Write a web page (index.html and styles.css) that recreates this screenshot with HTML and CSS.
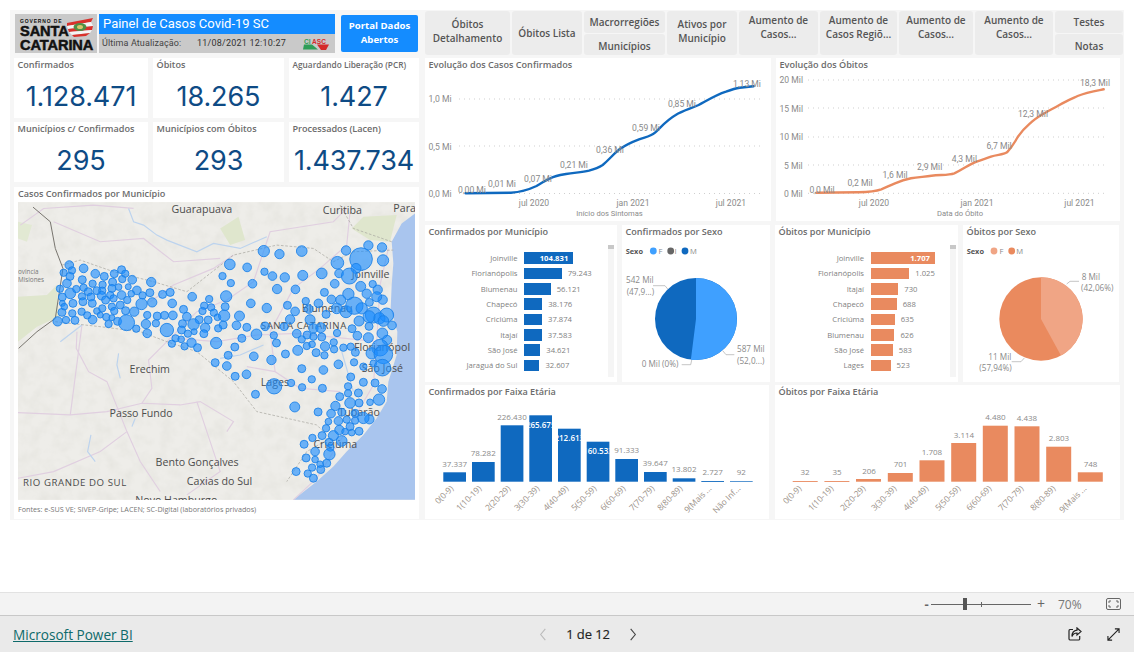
FILE: index.html
```html
<!DOCTYPE html>
<html lang="pt-BR">
<head>
<meta charset="utf-8">
<title>Painel de Casos Covid-19 SC</title>
<link rel="stylesheet" href="styles.css">
</head>
<body>
<main class="canvas">
  <section class="left">
    <header class="head">
      <div class="logo">
        <span class="logo-gov">GOVERNO DE</span>
        <span class="logo-sc">SANTA</span>
        <span class="logo-sc">CATARINA</span>
        <svg class="logo-flag" viewBox="0 0 28 19">
          <path d="M1 5 L27 0 L25 4 L1 8Z" fill="#d9312b"/>
          <path d="M1 8 L25 4 L27 8 L2 11Z" fill="#f5f5f5"/>
          <path d="M2 11 L27 8 L26 12 L3 14Z" fill="#d9312b"/>
          <path d="M3 14 L26 12 L24 15 L6 17Z" fill="#f5f5f5"/>
          <path d="M6 17 L24 15 L20 18 L8 19Z" fill="#d9312b"/>
          <ellipse cx="14" cy="9" rx="6.5" ry="4" fill="#4f8f45"/>
          <ellipse cx="14" cy="9" rx="3" ry="2" fill="#d8c66a"/>
        </svg>
      </div>
      <div class="banner">
        <h1 class="banner-title">Painel de Casos Covid-19 SC</h1>
        <div class="banner-sub">
          <span class="upd">Última Atualização:</span>
          <span class="stamp">11/08/2021 12:10:27</span>
          <svg class="ciasc" viewBox="0 0 28 13">
            <text x="2" y="6.5" class="ciasc-g">CI</text>
            <text x="10" y="6.5" class="ciasc-r">ASC</text>
            <path d="M1 12.5 L2 7.5 L10 7.5 L16 12.5Z" fill="#2f9e57"/>
            <path d="M15 7.5 L27 7.5 L24 13 L19 13Z" fill="#d52a2a"/>
          </svg>
        </div>
      </div>
      <a class="portal">Portal Dados<br>Abertos</a>
    </header>

    <div class="kpis">
      <div class="card kpi"><div class="title">Confirmados</div><div class="num">1.128.471</div></div>
      <div class="card kpi"><div class="title">Óbitos</div><div class="num">18.265</div></div>
      <div class="card kpi"><div class="title small">Aguardando Liberação (PCR)</div><div class="num">1.427</div></div>
      <div class="card kpi"><div class="title">Municípios c/ Confirmados</div><div class="num">295</div></div>
      <div class="card kpi"><div class="title">Municípios com Óbitos</div><div class="num">293</div></div>
      <div class="card kpi"><div class="title">Processados (Lacen)</div><div class="num">1.437.734</div></div>
    </div>

    <div class="card mapcard">
      <div class="title">Casos Confirmados por Município</div>
      <svg class="map" viewBox="53 51 1192 894">
        <defs>
          <filter id="terrain" x="0" y="0" width="100%" height="100%">
            <feTurbulence type="fractalNoise" baseFrequency=".025" numOctaves="4" seed="7"/>
            <feColorMatrix values="0 0 0 0 .62  0 0 0 0 .62  0 0 0 0 .56  0 0 0 .45 -.17"/>
          </filter>
        </defs>
        <rect x="53" y="51" width="1192" height="894" fill="#eeede9"/>
        <rect x="53" y="51" width="1192" height="894" filter="url(#terrain)"/>
        <path class="green" d="M53 335 L140 330 L170 300 L175 395 L110 425 L53 470Z"/>
        <path class="green" d="M1055 130 L1090 95 L1190 90 L1170 170 L1110 165Z"/>
        <path class="green" d="M660 130 L715 95 L735 165 L690 180Z"/>
        <path class="green light" d="M53 110 L95 120 L80 170 L53 160Z"/>
        <path class="sea" d="M1245 85 L1205 115 L1175 170 L1180 235 L1175 300 L1172 370 L1192 440 L1190 510 L1165 590 L1160 650 L1130 700 L1090 750 L1040 800 L1000 845 L950 890 L880 945 L1245 945Z"/>
        <g class="roads">
          <path d="M230 440 L228 490 L265 560 L320 590 L380 740 L420 830 L480 920"/>
          <path d="M53 683 L210 690 L320 680 L425 655 L540 660 L600 650 L700 710 L680 740"/>
          <path d="M210 690 L245 420"/>
          <path d="M425 655 L455 610 L445 525 L500 470 L590 380 L680 345 L760 290 L810 140 L1000 110 L1040 70"/>
          <path d="M530 460 L650 470 L770 450 L890 445 L1130 470"/>
          <path d="M740 545 L825 560 L900 610 L1020 620"/>
          <path d="M825 560 L810 440 L880 310 L960 250 L1040 180 L1050 80"/>
          <path d="M1165 190 L1140 300 L1130 470 L1120 600 L1050 720 L950 880 L880 945"/>
          <path d="M60 120 L130 70 L280 60 L400 70"/>
          <path d="M380 740 L300 800 L160 860 L53 880"/>
          <path d="M590 650 L640 800 L660 860 L560 930"/>
          <path d="M160 110 L300 170 L430 160 L520 230 L660 220"/>
          <path d="M450 350 L520 300 L640 250 L700 210"/>
        </g>
        <g class="rivers">
          <path d="M385 70 L400 110 L430 120 L470 150 L500 165 L590 200 L640 175 L720 190 L800 155"/>
          <path d="M355 505 L350 540 L360 580"/>
          <path d="M272 750 L262 800 L285 830"/>
          <path d="M245 420 L180 470"/>
          <path d="M660 520 L720 510 L790 480"/>
          <path d="M1025 500 L1060 620"/>
          <path d="M405 700 L395 725"/>
        </g>
        <g class="border">
          <path d="M185 240 L240 225 L340 260 L460 290 L560 320 L700 210 L830 180 L940 190 L1000 230 L1060 200 L1180 195"/>
          <path d="M165 410 L300 425 L420 440 L500 470 L590 500 L700 590 L770 680 L860 700 L950 720 L990 760 L920 800 L860 890"/>
          <path d="M1020 60 L1060 130 L1175 170"/>
        </g>
        <path class="state" d="M98 66 L150 110 L165 190 L188 250 L165 400 L110 440 L55 490"/>
        <g class="places">
          <text x="514" y="83">Guarapuava</text>
          <text x="968" y="88">Curitiba</text>
          <text x="1180" y="81">Para</text>
          <text x="388" y="565">Erechim</text>
          <text x="328" y="695">Passo Fundo</text>
          <text x="466" y="844">Bento Gonçalves</text>
          <text x="560" y="899">Caxias do Sul</text>
          <text x="405" y="958">Novo Hamburgo</text>
          <text x="68" y="903" class="state-name">RIO GRANDE DO SUL</text>
          <text x="53" y="268" class="mini">ovincia</text>
          <text x="53" y="292" class="mini">Misiones</text>
          <text x="1055" y="278">Joinville</text>
          <text x="905" y="380">Blumenau</text>
          <text x="782" y="431" class="state-name">SANTA CATARINA</text>
          <text x="1062" y="498">Florianópol</text>
          <text x="1085" y="560">São José</text>
          <text x="782" y="602">Lages</text>
          <text x="1015" y="692">Tubarão</text>
          <text x="940" y="788">Criciúma</text>
        </g>
        <g class="bubbles">
          <circle cx="207" cy="240" r="13"/><circle cx="190" cy="263" r="11"/><circle cx="215" cy="256" r="11"/><circle cx="250" cy="250" r="13"/><circle cx="209" cy="274" r="12"/><circle cx="285" cy="266" r="13"/><circle cx="312" cy="274" r="12"/><circle cx="342" cy="266" r="12"/><circle cx="364" cy="254" r="12"/><circle cx="375" cy="266" r="11"/><circle cx="246" cy="284" r="12"/><circle cx="200" cy="295" r="13"/><circle cx="277" cy="296" r="11"/><circle cx="307" cy="299" r="11"/><circle cx="337" cy="291" r="12"/><circle cx="366" cy="282" r="11"/><circle cx="396" cy="284" r="13"/><circle cx="453" cy="291" r="14"/><circle cx="179" cy="311" r="11"/><circle cx="210" cy="325" r="16"/><circle cx="228" cy="312" r="11"/><circle cx="250" cy="308" r="11"/><circle cx="264" cy="320" r="12"/><circle cx="290" cy="317" r="12"/><circle cx="306" cy="317" r="11"/><circle cx="335" cy="310" r="12"/><circle cx="355" cy="306" r="10"/><circle cx="384" cy="305" r="9"/><circle cx="410" cy="316" r="13"/><circle cx="427" cy="331" r="11"/><circle cx="449" cy="323" r="12"/><circle cx="487" cy="328" r="12"/><circle cx="510" cy="322" r="12"/><circle cx="186" cy="336" r="12"/><circle cx="245" cy="334" r="11"/><circle cx="272" cy="336" r="12"/><circle cx="304" cy="332" r="13"/><circle cx="330" cy="330" r="11"/><circle cx="364" cy="330" r="13"/><circle cx="393" cy="326" r="10"/><circle cx="186" cy="355" r="9"/><circle cx="218" cy="355" r="12"/><circle cx="248" cy="350" r="12"/><circle cx="276" cy="355" r="12"/><circle cx="316" cy="345" r="12"/><circle cx="340" cy="340" r="11"/><circle cx="381" cy="345" r="11"/><circle cx="424" cy="357" r="17"/><circle cx="456" cy="352" r="14"/><circle cx="516" cy="355" r="13"/><circle cx="185" cy="382" r="12"/><circle cx="216" cy="385" r="11"/><circle cx="244" cy="380" r="11"/><circle cx="192" cy="365" r="10"/><circle cx="261" cy="391" r="11"/><circle cx="290" cy="378" r="10"/><circle cx="306" cy="370" r="11"/><circle cx="335" cy="365" r="11"/><circle cx="360" cy="360" r="12"/><circle cx="342" cy="378" r="11"/><circle cx="376" cy="377" r="12"/><circle cx="402" cy="380" r="14"/><circle cx="441" cy="390" r="11"/><circle cx="471" cy="393" r="12"/><circle cx="493" cy="391" r="12"/><circle cx="518" cy="391" r="13"/><circle cx="172" cy="409" r="14"/><circle cx="197" cy="405" r="11"/><circle cx="224" cy="406" r="12"/><circle cx="277" cy="404" r="13"/><circle cx="318" cy="396" r="11"/><circle cx="300" cy="390" r="9"/><circle cx="335" cy="398" r="9"/><circle cx="325" cy="417" r="11"/><circle cx="352" cy="409" r="12"/><circle cx="379" cy="413" r="24"/><circle cx="408" cy="431" r="11"/><circle cx="437" cy="417" r="14"/><circle cx="467" cy="415" r="11"/><circle cx="441" cy="445" r="13"/><circle cx="500" cy="435" r="20"/>
          <circle cx="576" cy="335" r="13"/><circle cx="627" cy="342" r="11"/><circle cx="612" cy="362" r="11"/><circle cx="607" cy="378" r="11"/><circle cx="633" cy="367" r="11"/><circle cx="675" cy="365" r="12"/><circle cx="678" cy="334" r="17"/><circle cx="550" cy="373" r="12"/><circle cx="560" cy="395" r="13"/><circle cx="641" cy="383" r="11"/><circle cx="652" cy="397" r="10"/><circle cx="672" cy="392" r="17"/><circle cx="718" cy="393" r="15"/><circle cx="597" cy="404" r="12"/><circle cx="624" cy="405" r="12"/><circle cx="547" cy="416" r="12"/><circle cx="580" cy="418" r="17"/><circle cx="615" cy="428" r="14"/><circle cx="544" cy="435" r="12"/><circle cx="563" cy="446" r="11"/><circle cx="582" cy="440" r="9"/><circle cx="611" cy="446" r="12"/><circle cx="654" cy="430" r="11"/><circle cx="669" cy="420" r="12"/><circle cx="709" cy="421" r="13"/><circle cx="740" cy="427" r="12"/><circle cx="769" cy="448" r="16"/><circle cx="526" cy="460" r="11"/><circle cx="543" cy="463" r="10"/><circle cx="515" cy="476" r="11"/><circle cx="553" cy="484" r="11"/><circle cx="574" cy="473" r="14"/><circle cx="592" cy="488" r="12"/><circle cx="648" cy="474" r="17"/><circle cx="704" cy="486" r="12"/><circle cx="725" cy="460" r="12"/><circle cx="684" cy="511" r="12"/><circle cx="645" cy="533" r="12"/><circle cx="680" cy="543" r="13"/><circle cx="705" cy="574" r="12"/><circle cx="739" cy="568" r="13"/><circle cx="761" cy="514" r="13"/><circle cx="814" cy="525" r="14"/><circle cx="766" cy="628" r="12"/><circle cx="822" cy="604" r="23"/>
          <circle cx="791" cy="198" r="17"/><circle cx="838" cy="207" r="14"/><circle cx="905" cy="198" r="16"/><circle cx="689" cy="238" r="16"/><circle cx="741" cy="247" r="13"/><circle cx="667" cy="273" r="11"/><circle cx="692" cy="294" r="11"/><circle cx="757" cy="296" r="13"/><circle cx="793" cy="260" r="11"/><circle cx="817" cy="273" r="13"/><circle cx="854" cy="277" r="14"/><circle cx="908" cy="271" r="15"/><circle cx="965" cy="265" r="16"/><circle cx="1012" cy="233" r="19"/><circle cx="1038" cy="196" r="14"/><circle cx="1105" cy="181" r="14"/><circle cx="1146" cy="187" r="14"/><circle cx="1149" cy="226" r="17"/><circle cx="1083" cy="222" r="34"/><circle cx="1068" cy="250" r="15"/><circle cx="1017" cy="265" r="13"/><circle cx="1048" cy="273" r="24"/><circle cx="1004" cy="296" r="13"/><circle cx="1082" cy="304" r="15"/><circle cx="1118" cy="297" r="11"/><circle cx="1133" cy="314" r="14"/><circle cx="1148" cy="344" r="14"/><circle cx="831" cy="312" r="14"/><circle cx="886" cy="313" r="13"/><circle cx="973" cy="322" r="12"/><circle cx="1045" cy="327" r="17"/><circle cx="1100" cy="326" r="14"/><circle cx="1130" cy="335" r="15"/><circle cx="994" cy="343" r="13"/><circle cx="1022" cy="345" r="15"/><circle cx="917" cy="348" r="11"/><circle cx="955" cy="355" r="13"/><circle cx="752" cy="355" r="13"/><circle cx="800" cy="369" r="14"/><circle cx="862" cy="361" r="12"/><circle cx="885" cy="379" r="13"/><circle cx="926" cy="372" r="13"/><circle cx="978" cy="388" r="12"/><circle cx="1010" cy="370" r="16"/><circle cx="1038" cy="380" r="18"/><circle cx="1063" cy="362" r="26"/><circle cx="1085" cy="370" r="17"/><circle cx="1108" cy="352" r="12"/><circle cx="1120" cy="390" r="24"/><circle cx="1160" cy="390" r="21"/><circle cx="1138" cy="400" r="17"/><circle cx="870" cy="403" r="14"/><circle cx="930" cy="404" r="15"/><circle cx="1077" cy="408" r="15"/><circle cx="1107" cy="395" r="18"/><circle cx="1150" cy="408" r="16"/><circle cx="1176" cy="421" r="13"/><circle cx="795" cy="424" r="13"/><circle cx="852" cy="425" r="12"/><circle cx="890" cy="446" r="13"/><circle cx="940" cy="430" r="14"/><circle cx="962" cy="428" r="15"/><circle cx="1011" cy="444" r="11"/><circle cx="1056" cy="431" r="12"/><circle cx="1107" cy="424" r="12"/><circle cx="1147" cy="445" r="16"/><circle cx="1072" cy="452" r="13"/><circle cx="821" cy="451" r="11"/><circle cx="829" cy="474" r="12"/><circle cx="905" cy="463" r="11"/><circle cx="921" cy="450" r="12"/><circle cx="940" cy="455" r="11"/><circle cx="965" cy="456" r="12"/><circle cx="1001" cy="472" r="11"/><circle cx="1105" cy="458" r="15"/><circle cx="1161" cy="465" r="14"/><circle cx="893" cy="496" r="15"/><circle cx="920" cy="483" r="11"/><circle cx="936" cy="478" r="10"/><circle cx="975" cy="484" r="14"/><circle cx="948" cy="503" r="12"/><circle cx="973" cy="511" r="11"/><circle cx="1002" cy="493" r="11"/><circle cx="1030" cy="488" r="11"/><circle cx="1052" cy="485" r="11"/><circle cx="1066" cy="502" r="12"/><circle cx="856" cy="507" r="12"/><circle cx="1140" cy="488" r="25"/><circle cx="1115" cy="505" r="17"/><circle cx="1150" cy="508" r="28"/><circle cx="1120" cy="535" r="10"/><circle cx="1015" cy="538" r="13"/><circle cx="1062" cy="532" r="11"/><circle cx="1090" cy="545" r="11"/><circle cx="1147" cy="548" r="25"/><circle cx="905" cy="551" r="12"/><circle cx="970" cy="555" r="13"/><circle cx="1052" cy="576" r="12"/><circle cx="935" cy="583" r="11"/><circle cx="906" cy="607" r="11"/><circle cx="873" cy="594" r="11"/><circle cx="967" cy="610" r="12"/><circle cx="1044" cy="604" r="11"/><circle cx="1090" cy="592" r="12"/><circle cx="1125" cy="594" r="12"/><circle cx="1146" cy="612" r="13"/><circle cx="1075" cy="624" r="12"/><circle cx="1044" cy="625" r="11"/><circle cx="1019" cy="635" r="12"/><circle cx="1137" cy="644" r="17"/><circle cx="1110" cy="652" r="10"/><circle cx="884" cy="666" r="15"/><circle cx="1050" cy="654" r="16"/><circle cx="1077" cy="654" r="12"/><circle cx="1006" cy="663" r="14"/><circle cx="954" cy="681" r="12"/><circle cx="993" cy="686" r="13"/><circle cx="1025" cy="682" r="12"/><circle cx="1065" cy="685" r="12"/><circle cx="1108" cy="703" r="14"/><circle cx="1090" cy="699" r="17"/><circle cx="1015" cy="708" r="13"/><circle cx="1040" cy="704" r="11"/><circle cx="985" cy="710" r="10"/><circle cx="1065" cy="707" r="11"/><circle cx="978" cy="730" r="11"/><circle cx="1018" cy="735" r="14"/><circle cx="1050" cy="725" r="12"/><circle cx="1077" cy="739" r="12"/><circle cx="1055" cy="743" r="10"/><circle cx="1035" cy="740" r="10"/><circle cx="966" cy="752" r="12"/><circle cx="1000" cy="752" r="15"/><circle cx="937" cy="759" r="11"/><circle cx="912" cy="778" r="12"/><circle cx="987" cy="772" r="12"/><circle cx="1025" cy="768" r="16"/><circle cx="945" cy="800" r="13"/><circle cx="991" cy="788" r="11"/><circle cx="988" cy="808" r="17"/><circle cx="918" cy="819" r="12"/><circle cx="945" cy="824" r="10"/><circle cx="980" cy="835" r="12"/><circle cx="960" cy="838" r="10"/><circle cx="936" cy="848" r="11"/><circle cx="962" cy="854" r="12"/><circle cx="888" cy="860" r="12"/><circle cx="923" cy="866" r="11"/><circle cx="940" cy="880" r="12"/>
        </g>
      </svg>
      <p class="sources">Fontes: e-SUS VE; SIVEP-Gripe; LACEN; SC-Digital (laboratórios privados)</p>
    </div>
  </section>

  <section class="right">
    <nav class="nav">
      <div class="btn lift">Óbitos<br>Detalhamento</div>
      <div class="btn">Óbitos Lista</div>
      <div class="stack"><div class="btn">Macrorregiões</div><div class="btn">Municípios</div></div>
      <div class="btn lift">Ativos por<br>Município</div>
      <div class="btn up">Aumento de<br>Casos...</div>
      <div class="btn up">Aumento de<br>Casos Regiõ...</div>
      <div class="btn up">Aumento de<br>Casos...</div>
      <div class="btn up">Aumento de<br>Casos...</div>
      <div class="stack"><div class="btn">Testes</div><div class="btn">Notas</div></div>
    </nav>

    <div class="row row-line">
      <div class="card w-line1">
        <div class="title">Evolução dos Casos Confirmados</div>
        <svg class="chart" viewBox="425 74 346 147">
          <g class="grid">
            <line x1="459" x2="762" y1="99" y2="99"/><line x1="459" x2="762" y1="146" y2="146"/><line x1="459" x2="762" y1="193.5" y2="193.5"/>
          </g>
          <g class="axis">
            <text x="428.5" y="102">1,0 Mi</text><text x="428.5" y="149.5">0,5 Mi</text><text x="428.5" y="197">0,0 Mi</text>
          </g>
          <g class="axis mid">
            <text x="534" y="205.5">jul 2020</text><text x="633" y="205.5">jan 2021</text><text x="731" y="205.5">jul 2021</text>
          </g>
          <text class="axis-title" x="609.5" y="216">Início dos Sintomas</text>
          <path class="line blue-line" d="M465.7 193.3 L511 192.7 C520 192.2 528 190 536.5 186 C542 183 545 180.5 550 178.3 C556 175.5 560 175 566 174 C575 172.5 582 172.5 589 170.7 C595 169 598 168 602.7 165 C610 159 614 153 621 148.3 C627 144 632 142 639 139.3 C645 137 650 137 655 132.7 C663 125 667 120 675.7 115 C683 110.5 690 109 698.6 105 C708 100 716 95 726 91.7 C731 89.8 735 88.3 739.7 87.7 L753.4 86.3"/>
          <g class="dl mid">
            <text x="472" y="193">0,00 Mi</text><text x="502" y="186.5">0,01 Mi</text><text x="538" y="181.5">0,07 Mi</text><text x="574" y="167.5">0,21 Mi</text><text x="610" y="153">0,36 Mi</text><text x="646" y="131">0,59 Mi</text><text x="682" y="107">0,85 Mi</text><text x="747" y="86.5">1,13 Mi</text>
          </g>
        </svg>
      </div>
      <div class="card w-line2">
        <div class="title">Evolução dos Óbitos</div>
        <svg class="chart" viewBox="776 74 344 147">
          <g class="grid">
            <line x1="808" x2="1107" y1="80" y2="80"/><line x1="808" x2="1107" y1="108" y2="108"/><line x1="808" x2="1107" y1="137" y2="137"/><line x1="808" x2="1107" y1="165" y2="165"/><line x1="808" x2="1107" y1="193.3" y2="193.3"/>
          </g>
          <g class="axis">
            <text x="779.5" y="83">20 Mil</text><text x="779.5" y="111.5">15 Mil</text><text x="779.5" y="140">10 Mil</text><text x="784" y="168.5">5 Mil</text><text x="784" y="196.5">0 Mil</text>
          </g>
          <g class="axis mid">
            <text x="874" y="205.5">jul 2020</text><text x="977" y="205.5">jan 2021</text><text x="1079.5" y="205.5">jul 2021</text>
          </g>
          <text class="axis-title" x="960" y="216">Data do Óbito</text>
          <path class="line orange-line" d="M816.4 192.7 L858.4 192.3 C868 192 875 191.5 881.3 189.3 C887 187 890 185.3 895 183.3 C901 180.8 905 179.5 911 178.3 C918 177 925 176.8 931.5 175.7 C940 174.5 948 175.5 954.3 173.3 C962 170 966 166.5 972.6 163.3 C979 160.3 985 159 991 156.7 C997 154.5 1003 155 1007 152.3 C1013 146 1014 143 1018 136.7 C1023 129 1026 127 1032 121.7 C1041 114 1050 110.5 1059.4 105 C1066 101 1071 99 1077.6 96 C1086 92.5 1095 91 1103.7 89.3"/>
          <g class="dl mid">
            <text x="822" y="193">0,0 Mil</text><text x="860" y="186">0,2 Mil</text><text x="895" y="178">1,6 Mil</text><text x="929.7" y="170">2,9 Mil</text><text x="964.4" y="162">4,3 Mil</text><text x="999" y="149">6,7 Mil</text><text x="1033" y="117">12,3 Mil</text><text x="1095" y="86">18,3 Mil</text>
          </g>
        </svg>
      </div>
    </div>

    <div class="row row-mid">
      <div class="card w-bar1">
        <div class="title">Confirmados por Município</div>
        <div class="barwrap">
          <ul class="bars">
            <li class="b"><span class="lab">Joinville</span><span class="bar blue" style="width:49.3px"><em>104.831</em></span></li>
            <li class="b"><span class="lab">Florianópolis</span><span class="bar blue" style="width:37.7px"></span><span class="val">79.243</span></li>
            <li class="b"><span class="lab">Blumenau</span><span class="bar blue" style="width:26.7px"></span><span class="val">56.121</span></li>
            <li class="b"><span class="lab">Chapecó</span><span class="bar blue" style="width:18.2px"></span><span class="val">38.176</span></li>
            <li class="b"><span class="lab">Criciúma</span><span class="bar blue" style="width:18px"></span><span class="val">37.874</span></li>
            <li class="b"><span class="lab">Itajaí</span><span class="bar blue" style="width:17.8px"></span><span class="val">37.583</span></li>
            <li class="b"><span class="lab">São José</span><span class="bar blue" style="width:16.3px"></span><span class="val">34.621</span></li>
            <li class="b"><span class="lab">Jaraguá do Sul</span><span class="bar blue" style="width:15.4px"></span><span class="val">32.607</span></li>
          </ul>
          <div class="scroll"><span></span></div>
        </div>
      </div>
      <div class="card w-pie1">
        <div class="title">Confirmados por Sexo</div>
        <svg class="chart" viewBox="622 241 148 141">
          <text class="lg-t" x="625.7" y="253.5">Sexo</text>
          <circle cx="653.3" cy="251" r="3.4" fill="#3fa0ff"/><text class="lg" x="658.5" y="253.5">F</text>
          <circle cx="670.7" cy="251" r="3.4" fill="#666"/><text class="lg" x="674.5" y="253.5">I</text>
          <circle cx="685" cy="251" r="3.4" fill="#0f69bf"/><text class="lg" x="690" y="253.5">M</text>
          <circle cx="696" cy="319" r="41" fill="#0f69bf"/>
          <path d="M696 319 L696 278 A41 41 0 1 1 690.86 359.68Z" fill="#3fa0ff"/>
          <g class="lead"><path d="M653 285.7 L665 285.7 L667.7 289"/><path d="M722.7 350.7 L726 354.7 L734.3 354.7"/><path d="M681.7 364.7 L690.7 364.7 L691.7 360"/></g>
          <g class="pl">
            <text x="626" y="282.7">542 Mil</text><text x="626.7" y="295">(47,9...)</text>
            <text x="737" y="351.7">587 Mil</text><text x="737" y="364">(52,0...)</text>
            <text x="641.7" y="367.3">0 Mil (0%)</text>
          </g>
        </svg>
      </div>
      <div class="card w-bar2">
        <div class="title">Óbitos por Município</div>
        <div class="barwrap">
          <ul class="bars alt">
            <li class="b"><span class="lab">Joinville</span><span class="bar orange" style="width:64px"><em>1.707</em></span></li>
            <li class="b"><span class="lab">Florianópolis</span><span class="bar orange" style="width:38.3px"></span><span class="val">1.025</span></li>
            <li class="b"><span class="lab">Itajaí</span><span class="bar orange" style="width:27.3px"></span><span class="val">730</span></li>
            <li class="b"><span class="lab">Chapecó</span><span class="bar orange" style="width:25.7px"></span><span class="val">688</span></li>
            <li class="b"><span class="lab">Criciúma</span><span class="bar orange" style="width:23.7px"></span><span class="val">635</span></li>
            <li class="b"><span class="lab">Blumenau</span><span class="bar orange" style="width:23.4px"></span><span class="val">626</span></li>
            <li class="b"><span class="lab">São José</span><span class="bar orange" style="width:21.8px"></span><span class="val">583</span></li>
            <li class="b"><span class="lab">Lages</span><span class="bar orange" style="width:19.6px"></span><span class="val">523</span></li>
          </ul>
          <div class="scroll"><span></span></div>
        </div>
      </div>
      <div class="card w-pie2">
        <div class="title">Óbitos por Sexo</div>
        <svg class="chart" viewBox="963 241 156 141">
          <text class="lg-t" x="966.7" y="253.5">Sexo</text>
          <circle cx="994" cy="251" r="3.4" fill="#f0a585"/><text class="lg" x="999.5" y="253.5">F</text>
          <circle cx="1011.7" cy="251" r="3.4" fill="#ea8a5e"/><text class="lg" x="1016.3" y="253.5">M</text>
          <circle cx="1041" cy="319" r="41.7" fill="#ea8a5e"/>
          <path d="M1041 319 L1041 277.3 A41.7 41.7 0 0 1 1060.96 355.6Z" fill="#f0a585"/>
          <g class="lead"><path d="M1066.7 284 L1070 281.3 L1079 281.3"/><path d="M1011.7 361.7 L1021 361.7 L1024.3 358"/></g>
          <g class="pl">
            <text x="1081.7" y="280">8 Mil</text><text x="1081" y="290.7">(42,06%)</text>
            <text x="988.3" y="360">11 Mil</text><text x="979.3" y="370.7">(57,94%)</text>
          </g>
        </svg>
      </div>
    </div>

    <div class="row row-age">
      <div class="card w-age1">
        <div class="title">Confirmados por Faixa Etária</div>
        <svg class="chart" viewBox="425 401 344 118">
          <defs>
            <clipPath id="c3"><rect x="529.3" y="410" width="22.7" height="30"/></clipPath>
            <clipPath id="c4"><rect x="558" y="410" width="22.7" height="40"/></clipPath>
            <clipPath id="c5"><rect x="586.7" y="410" width="22.7" height="50"/></clipPath>
          </defs>
          <g class="cols-blue">
            <rect x="443.3" y="472.3" width="22.7" height="9.4"/><rect x="472" y="462" width="22.7" height="19.7"/><rect x="500.7" y="425.3" width="22.7" height="56.4"/><rect x="529.3" y="415.3" width="22.7" height="66.4"/><rect x="558" y="428.7" width="22.7" height="53"/><rect x="586.7" y="441.7" width="22.7" height="40"/><rect x="615.3" y="459" width="22.7" height="22.7"/><rect x="644" y="472" width="22.7" height="9.7"/><rect x="672.7" y="478.3" width="22.7" height="3.4"/><rect x="701.3" y="481" width="22.7" height="0.9"/><rect x="730" y="481.2" width="22.7" height="0.7"/>
          </g>
          <g class="dl mid age">
            <text x="454.7" y="466.5">37.337</text><text x="483.3" y="456">78.282</text><text x="512" y="419.5">226.430</text>
            <text x="626.7" y="452.5">91.333</text><text x="655.3" y="465.5">39.647</text><text x="684" y="472">13.802</text><text x="712.7" y="475">2.727</text><text x="741.3" y="475">92</text>
          </g>
          <g class="dl mid age inv">
            <text x="540.7" y="428" clip-path="url(#c3)">265.675</text><text x="569.3" y="441" clip-path="url(#c4)">212.613</text><text x="598" y="454" clip-path="url(#c5)">160.533</text>
          </g>
          <g class="ticks">
            <text transform="translate(454 489) rotate(-45)">0(0-9)</text><text transform="translate(482 489) rotate(-45)">1(10-19)</text><text transform="translate(511 489) rotate(-45)">2(20-29)</text><text transform="translate(540 489) rotate(-45)">3(30-39)</text><text transform="translate(569 489) rotate(-45)">4(40-49)</text><text transform="translate(597 489) rotate(-45)">5(50-59)</text><text transform="translate(626 489) rotate(-45)">6(60-69)</text><text transform="translate(655 489) rotate(-45)">7(70-79)</text><text transform="translate(683 489) rotate(-45)">8(80-89)</text><text transform="translate(712 489) rotate(-45)">9(Mais ...</text><text transform="translate(741 489) rotate(-45)">Não Inf...</text>
          </g>
        </svg>
      </div>
      <div class="card w-age2">
        <div class="title">Óbitos por Faixa Etária</div>
        <svg class="chart" viewBox="775 401 345 118">
          <g class="cols-orange">
            <rect x="792.7" y="481" width="25" height="0.9"/><rect x="824.4" y="481" width="25" height="0.9"/><rect x="856" y="479" width="25" height="2.7"/><rect x="887.8" y="473" width="25" height="8.7"/><rect x="919.5" y="460.3" width="25" height="21.4"/><rect x="951.2" y="443" width="25" height="38.7"/><rect x="982.8" y="425.7" width="25" height="56"/><rect x="1014.5" y="426.3" width="25" height="55.4"/><rect x="1046.2" y="446.7" width="25" height="35"/><rect x="1077.8" y="472.3" width="25" height="9.4"/>
          </g>
          <g class="dl mid age">
            <text x="805" y="475">32</text><text x="837" y="475">35</text><text x="869" y="473.5">206</text><text x="900.5" y="466.5">701</text><text x="932" y="454.5">1.708</text><text x="964" y="437.5">3.114</text><text x="995.5" y="419.5">4.480</text><text x="1027" y="420.5">4.438</text><text x="1059" y="440.5">2.803</text><text x="1090.5" y="466.5">748</text>
          </g>
          <g class="ticks">
            <text transform="translate(802 489) rotate(-45)">0(0-9)</text><text transform="translate(834 489) rotate(-45)">1(10-19)</text><text transform="translate(866 489) rotate(-45)">2(20-29)</text><text transform="translate(897 489) rotate(-45)">3(30-39)</text><text transform="translate(929 489) rotate(-45)">4(40-49)</text><text transform="translate(961 489) rotate(-45)">5(50-59)</text><text transform="translate(992 489) rotate(-45)">6(60-69)</text><text transform="translate(1024 489) rotate(-45)">7(70-79)</text><text transform="translate(1056 489) rotate(-45)">8(80-89)</text><text transform="translate(1087 489) rotate(-45)">9(Mais ...</text>
          </g>
        </svg>
      </div>
    </div>
  </section>
</main>

<div class="zoombar">
  <span class="zm">-</span>
  <div class="slider"><span class="tick"></span><span class="thumb"></span></div>
  <span class="zp">+</span>
  <span class="pct">70%</span>
  <svg class="fit" viewBox="0 0 15 12"><rect x="0.5" y="0.5" width="14" height="11" rx="1.5"/><path d="M3 5V3H5M10 3H12V5M12 7V9H10M5 9H3V7"/></svg>
</div>

<footer class="foot">
  <a class="brand">Microsoft Power BI</a>
  <div class="pager">
    <svg class="chev off" viewBox="0 0 8 14"><path d="M6.5 1 L1.5 7 L6.5 13"/></svg>
    <span class="page">1 de 12</span>
    <svg class="chev" viewBox="0 0 8 14"><path d="M1.5 1 L6.5 7 L1.5 13"/></svg>
  </div>
  <svg class="act share" viewBox="0 0 14 14"><path d="M5 2.5H2A1.2 1.2 0 0 0 1 3.7V11.8A1.2 1.2 0 0 0 2 13H10.5A1.2 1.2 0 0 0 11.7 11.8V9"/><path d="M9 1 L13 4.6 L9 8 V6 C6.5 6 5 7 4 9.5 C4 6 6 3.5 9 3.2Z"/></svg>
  <svg class="act expand" viewBox="0 0 14 14"><path d="M1 8.5V13H5.5M13 5.5V1H8.5M1 13L13 1"/></svg>
</footer>
</body>
</html>
```

FILE: styles.css
```css
* { box-sizing: border-box; }
html, body { margin: 0; padding: 0; }
body {
  width: 1134px; height: 652px; overflow: hidden; background: #fff;
  display: flex; flex-direction: column;
  font-family: "Open Sans", "Liberation Sans", sans-serif; color: #666;
}
.canvas {
  margin: 10px 0 0 10px; width: 1114px; height: 510px; background: #f6f6f6;
  display: flex; gap: 6px; padding: 1px 0 0 4px;
}
.left { width: 405px; padding-top: 3px; display: flex; flex-direction: column; }
.right { width: 699px; display: flex; flex-direction: column; }
.card { background: #fff; }
.title {
  font-size: 9.1px; font-weight: 600; color: #6b6b6b; line-height: 15px; height: 15px;
  padding: 0 0 0 3.5px; white-space: nowrap;
}
.title.small { font-size: 8.3px; }

/* header */
.head { display: flex; height: 39px; padding-left: 1px; margin-bottom: 5px; }
.logo {
  width: 82px; background: #c9c9c9; position: relative; padding: 4px 0 0 5px;
  display: flex; flex-direction: column; font-family: "Liberation Sans", sans-serif; color: #111;
}
.logo-gov { font-size: 5px; font-weight: 700; letter-spacing: .85px; line-height: 6px; }
.logo-sc { font-size: 14.6px; font-weight: 700; line-height: 14.6px; height: 13.5px; -webkit-text-stroke: .5px #111; letter-spacing: -.1px; white-space: nowrap; }
.logo-flag { position: absolute; left: 51px; top: 4px; width: 28px; height: 19px; }
.banner { width: 236px; margin-left: 2px; display: flex; flex-direction: column; }
.banner-title {
  margin: 0; height: 20px; background: #148cff; color: #fff; font: 400 13px/20px Roboto, sans-serif;
  padding-left: 4px;
}
.banner-sub {
  height: 19px; background: #c9c9c9; display: flex; align-items: center; padding-left: 3px;
  font: 400 9px/19px Roboto, sans-serif; color: #444; letter-spacing: .1px;
}
.upd { width: 95px; }
.stamp { width: 105px; color: #333; letter-spacing: .22px; }
.ciasc { width: 28px; height: 13px; }
.ciasc-g, .ciasc-r { font: 700 6.5px "Liberation Sans", sans-serif; }
.ciasc-g { fill: #2f9e57; }
.ciasc-r { fill: #d52a2a; }
.portal {
  width: 77px; height: 37px; margin: 1px 0 0 6px; background: #148cff; color: #fff; border-radius: 2px;
  font: 700 9.6px/14px "Open Sans", sans-serif; text-align: center; padding-top: 4px;
}

/* KPI */
.kpis { display: grid; grid-template-columns: 134px 131px 130px; grid-template-rows: 60px 60px; gap: 4px 5px; }
.kpi .title { line-height: 13px; height: 14px; }
.num {
  font: 400 27px/50px Inter, sans-serif; color: #0e4b85; text-align: center; letter-spacing: -.1px;
  height: 46px; white-space: nowrap;
}

/* map */
.mapcard { margin-top: 5px; height: 332px; width: 405px; padding: 0 4px; display: flex; flex-direction: column; }
.mapcard .title { padding-left: 0; line-height: 13px; }
.map { width: 397px; height: 298px; display: block; }
.map text { font-family: "Open Sans", sans-serif; }
.green { fill: #dfe6cd; }
.green.light { fill: #e2e9d3; }
.sea { fill: #a9c5ee; }
.roads path { fill: none; stroke: #e0cfe0; stroke-width: 3.5; }
.rivers path { fill: none; stroke: #bcd3ee; stroke-width: 3.5; }
.border path { fill: none; stroke: #aaa9a2; stroke-width: 2.2; stroke-dasharray: 8 5; }
.state { fill: none; stroke: #77746e; stroke-width: 3; }
.places text { font-size: 32px; fill: #4c4c4c; }
.places .state-name { font-size: 29px; letter-spacing: 1.7px; }
.places .mini { font-size: 19px; fill: #777; }
.bubbles circle { fill: #1a8cff; fill-opacity: .62; stroke: #1a80e6; stroke-width: 3; stroke-opacity: .85; }
.sources { margin: 0; font-size: 7.2px; line-height: 19px; color: #777; white-space: nowrap; }

/* nav */
.nav {
  display: grid; grid-template-columns: 85px 70px 81px 70px 79px 77px 74px 78px 68px; column-gap: 2px;
  height: 44px; margin-bottom: 3px;
}
.btn {
  background: #ececec; border-radius: 3px; color: #555; font-size: 10px; font-weight: 600; line-height: 14px;
  text-align: center; display: flex; align-items: center; justify-content: center; height: 100%; white-space: nowrap;
}
.btn.up { align-items: flex-start; padding-top: 2px; }
.btn.lift { padding-bottom: 5px; }
.stack { display: flex; flex-direction: column; gap: 1px; }
.stack .btn { height: 21.5px; padding-top: 1px; }
.stack .btn + .btn { padding-top: 3px; }

/* rows */
.row { display: flex; }
.row-line { height: 163px; gap: 5px; margin-bottom: 4px; }
.row-mid { height: 157px; gap: 5px; margin-bottom: 3px; }
.row-age { height: 134px; gap: 6px; }
.w-line1 { width: 346px; } .w-line2 { width: 344px; }
.w-bar1 { width: 192px; } .w-pie1 { width: 148px; }
.w-bar2 { width: 183px; } .w-pie2 { width: 156px; }
.w-age1 { width: 344px; } .w-age2 { width: 345px; }
.row .title { line-height: 13px; height: 16px; }
.chart { display: block; width: 100%; }
.row-line .chart { height: 147px; }
.row-mid .chart { height: 141px; }
.row-age .chart { height: 118px; }
.chart text { font-family: "Open Sans", sans-serif; }

.grid line { stroke: #cfcfcf; stroke-width: 1; stroke-dasharray: 1 4; }
.chart .axis text, .chart .dl text, .chart .axis-title { font-family: Roboto, sans-serif; }
.axis text { font-size: 8.6px; fill: #8b8b8b; }
.axis.mid text, .dl.mid text { text-anchor: middle; }
.axis-title { font-size: 7.6px; fill: #8b8b8b; text-anchor: middle; }
.line { fill: none; stroke-width: 2.4; stroke-linecap: round; stroke-linejoin: round; }
.blue-line { stroke: #0f69bf; }
.orange-line { stroke: #e98a5f; }
.dl text { font-size: 8.6px; fill: #8a8a8a; }
.chart .dl.age text { font-family: "Open Sans", sans-serif; font-size: 8px; }
.dl.inv text { fill: #fff; font-weight: 600; }

/* bar lists */
.barwrap { display: flex; height: 141px; }
.bars { list-style: none; margin: 0; padding: 9.5px 0 0; width: 183px; }
.bars.alt { width: 175px; }
.b { display: flex; align-items: center; height: 15.33px; }
.lab { width: 92.5px; text-align: right; font-size: 7.7px; color: #7f7f7f; margin-right: 6.5px; white-space: nowrap; }
.alt .lab { width: 89px; margin-right: 7px; }
.bar { height: 11.5px; display: flex; align-items: center; justify-content: flex-end; flex: none; }
.bar em { font-style: normal; font-weight: 700; color: #fff; font-size: 7.7px; padding-right: 5px; }
.blue { background: #0f69bf; }
.orange { background: #e98a5f; }
.val { font-size: 7.7px; color: #7f7f7f; margin-left: 6px; }
.scroll { width: 6px; height: 132px; margin-top: 4px; background: #f5f5f5; }
.scroll span { display: block; height: 4px; background: #c8c8c8; }

/* legend & pies */
.lg-t { font-size: 7.4px; font-weight: 700; fill: #555; }
.lg { font-size: 7.6px; fill: #8a8a8a; }
.pl text { font-size: 8.2px; fill: #8a8a8a; }
.lead path { fill: none; stroke: #b5b5b5; stroke-width: .8; }
.cols-blue rect { fill: #0f69bf; }
.cols-orange rect { fill: #e98a5f; }
.ticks text { font-size: 8.4px; fill: #9a9087; text-anchor: end; }

/* chrome */
.zoombar {
  margin-top: 72px; height: 23px; background: #f3f3f3; border-top: 1px solid #e2e2e2;
  display: flex; align-items: center; color: #666; padding-left: 922px; flex: none;
}
.zm { width: 9px; font: 700 13px/1 "Open Sans", sans-serif; text-align: center; }
.slider { width: 100px; height: 1px; background: #666; position: relative; }
.thumb { position: absolute; left: 32px; top: -6px; width: 4px; height: 12px; background: #555; }
.tick { position: absolute; left: 50px; top: -2px; width: 1px; height: 5px; background: #666; }
.zp { width: 20px; font: 400 14px/1 "Open Sans", sans-serif; text-align: center; margin-left: 0; }
.pct { font-size: 12px; margin-left: 7px; width: 48px; color: #777; }
.fit { width: 15px; height: 12px; fill: none; stroke: #666; stroke-width: 1; }
.foot {
  height: 37px; background: #eaeaea; border-top: 1px solid #c8c8c8; display: flex; align-items: center;
  padding-left: 13px; flex: none;
}
.brand { width: 526px; font-size: 13.6px; color: #0e6a6a; text-decoration: underline; white-space: nowrap; }
.pager { display: flex; align-items: center; width: 98px; justify-content: space-between; }
.chev { width: 8px; height: 13px; fill: none; stroke: #444; stroke-width: 1.2; }
.chev.off { stroke: #bbb; }
.page { font-size: 13px; color: #222; letter-spacing: -.1px; -webkit-text-stroke: .15px #222; }
.act { width: 14px; height: 14px; fill: none; stroke: #222; stroke-width: 1.2; }
.share { margin-left: 431px; }
.expand { margin-left: 25px; width: 13px; height: 13px; }
```
